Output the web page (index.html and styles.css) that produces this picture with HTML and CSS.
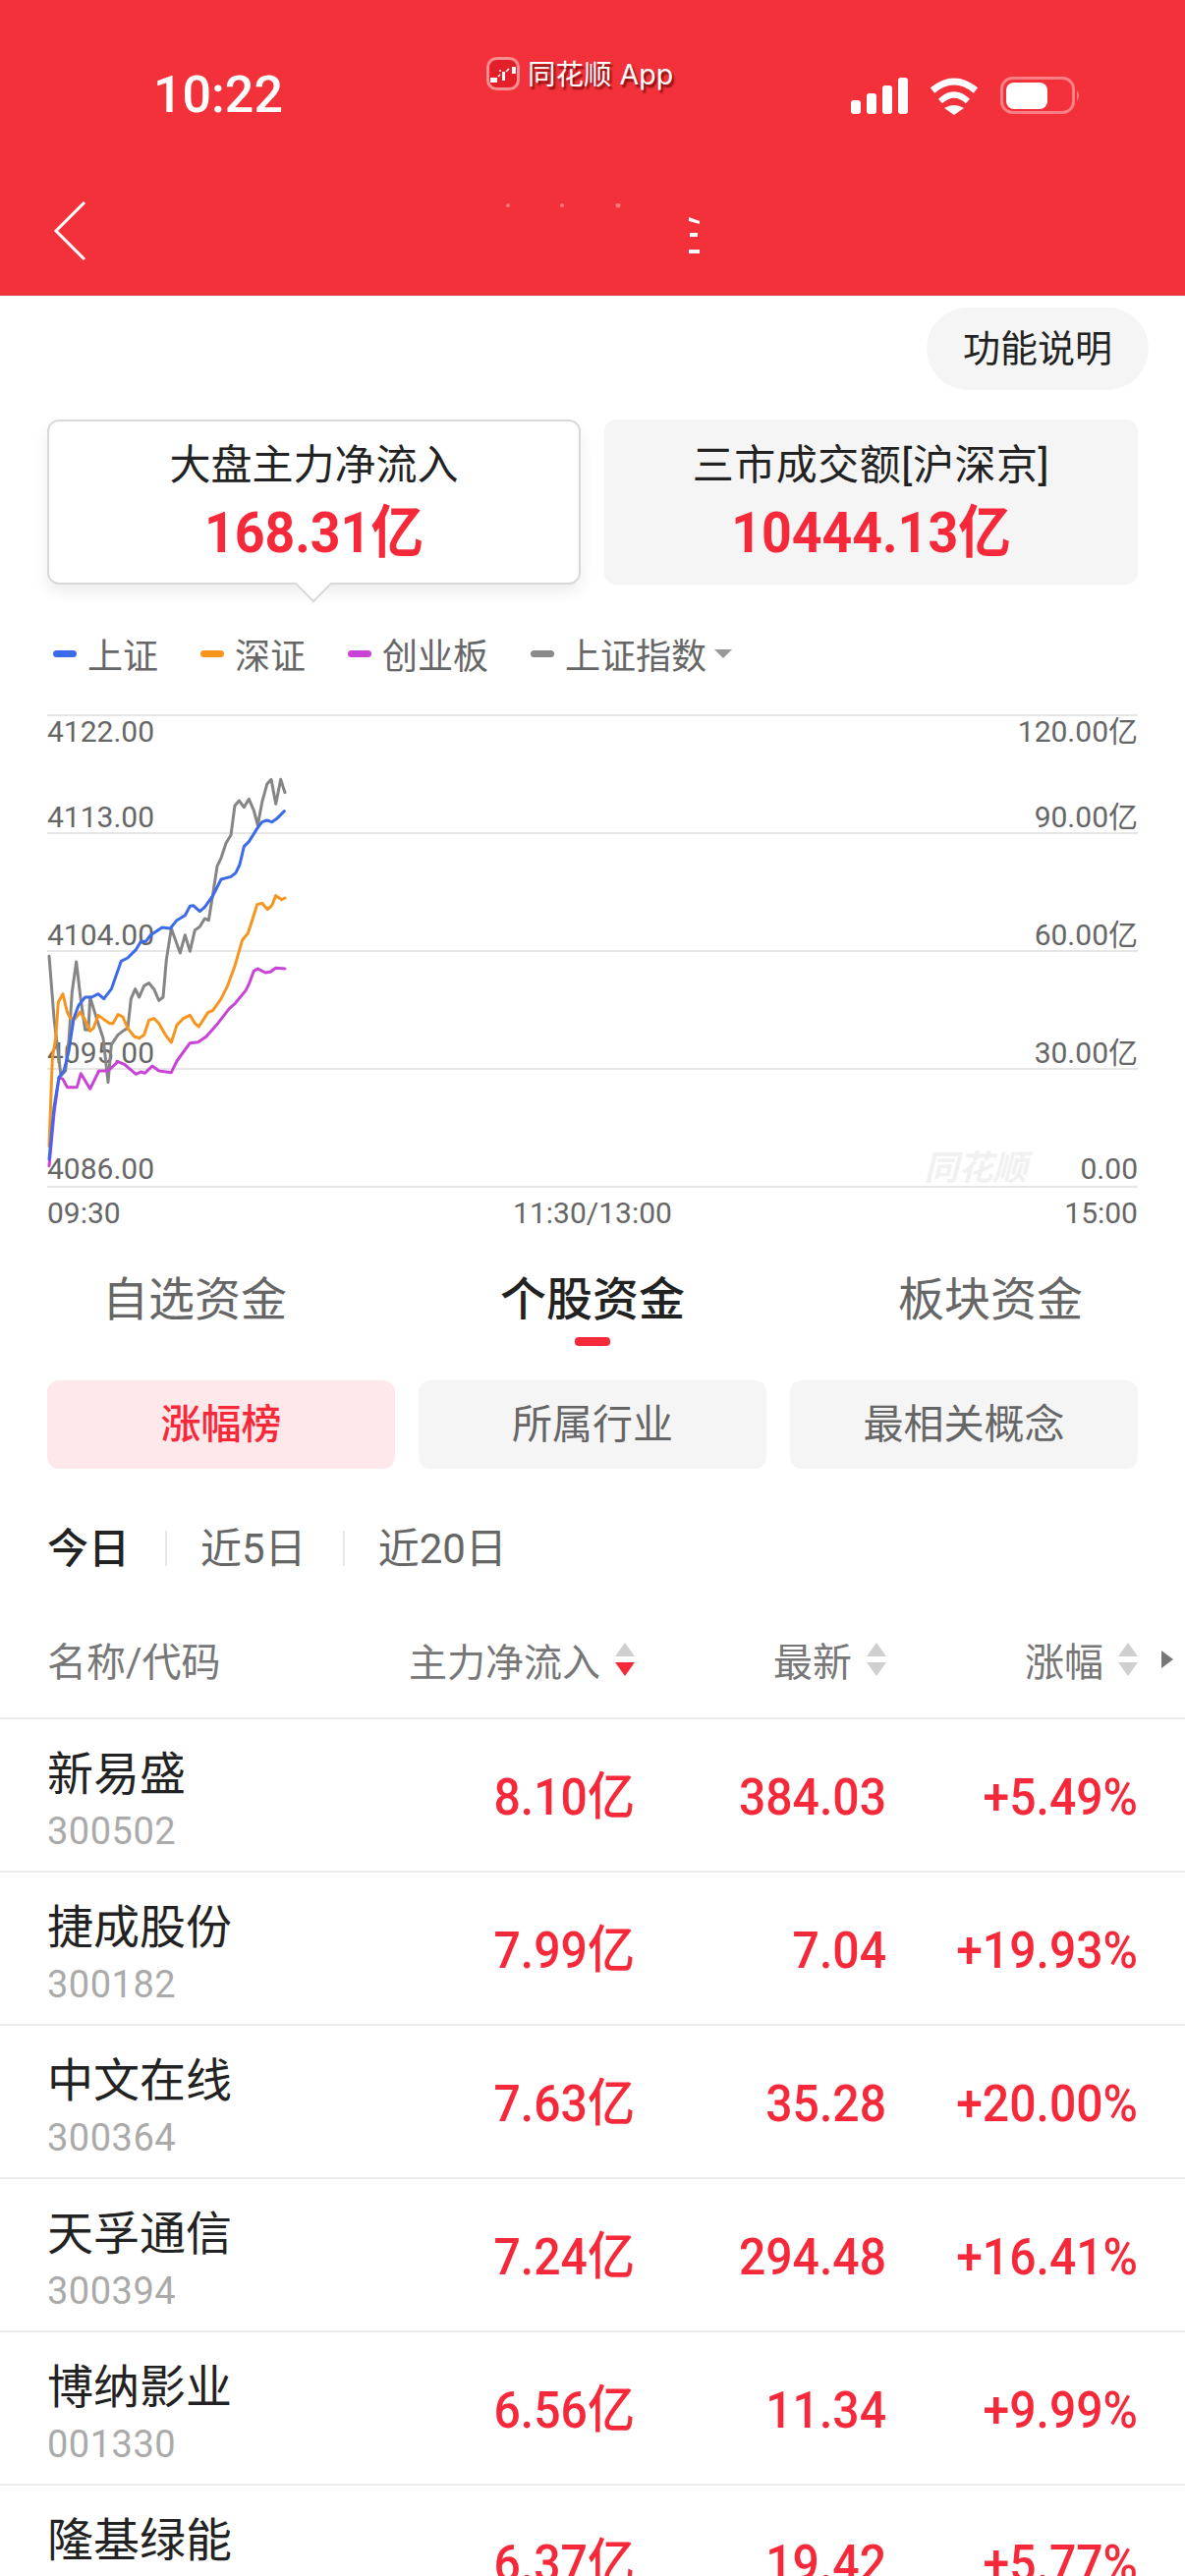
FILE: index.html
```html
<!DOCTYPE html>
<html lang="zh-CN">
<head>
<meta charset="utf-8">
<title>资金流向</title>
<link rel="stylesheet" href="styles.css">
</head>
<body>
<div class="page">
  <header class="header">
    <div class="status">
      <span class="clock">10:22</span>
      <span class="source">
        <svg class="source-logo" width="34" height="34" viewBox="0 0 34 34"><rect x="1.5" y="1.5" width="31" height="31" rx="9" fill="#e3202a" stroke="#f98d90" stroke-width="3"/><path d="M4 21h7v5H4zM16 15h3v9h-3zM26 10h4v7h-4z" fill="#fff"/><path d="M12 20l2-2M20 15l3-3M13 14h2" stroke="#fff" stroke-width="1.5" fill="none"/></svg>
        <span class="source-name">同花顺 App</span>
      </span>
      <span class="status-icons">
        <svg class="signal" width="58" height="38" viewBox="0 0 58 38"><rect x="0" y="23" width="10" height="14" rx="3"/><rect x="16" y="16" width="10" height="21" rx="3"/><rect x="32" y="8" width="10" height="29" rx="3"/><rect x="48" y="0" width="10" height="37" rx="3"/></svg>
        <svg class="wifi" width="50" height="38" viewBox="0 0 50 38"><path d="M3 13Q25-5 47 13" fill="none" stroke="#fff" stroke-width="7"/><path d="M11 24Q25 11 39 24" fill="none" stroke="#fff" stroke-width="6"/><path d="M15 31Q25 25 35 31L25 38Z" fill="#fff"/></svg>
        <svg class="battery" width="82" height="38" viewBox="0 0 82 38"><rect x="1.5" y="1.5" width="73" height="35" rx="11" fill="none" stroke="#fb8085" stroke-width="3"/><rect x="6" y="6" width="42" height="27" rx="8" fill="#fff"/><path d="M78 14q4 5 0 11z" fill="#fb8085"/></svg>
      </span>
    </div>
    <div class="nav">
      <svg class="back" width="34" height="60" viewBox="0 0 34 60"><path d="M32 1L3 30l29 29" fill="none" stroke="#fff" stroke-width="3"/></svg>
      <svg class="smudge" width="200" height="52" viewBox="0 0 200 52"><circle cx="2" cy="2" r="2" fill="#f9777d"/><circle cx="57" cy="2" r="2" fill="#f9777d"/><circle cx="114" cy="2" r="2.5" fill="#f9777d"/><path d="M186 14l11 4v3l-11-3zM187 30h8v4h-8zM186 47h11v4h-11z" fill="#fff"/></svg>
    </div>
  </header>

  <div class="help-row"><span class="help">功能说明</span></div>

  <section class="cards">
    <div class="card card-active">
      <div class="card-title">大盘主力净流入</div>
      <div class="card-value">168.31亿</div>
    </div>
    <div class="card card-plain">
      <div class="card-title">三市成交额[沪深京]</div>
      <div class="card-value">10444.13亿</div>
    </div>
  </section>

  <div class="legend">
    <span class="legend-item"><i class="dash dash-blue"></i>上证</span>
    <span class="legend-item"><i class="dash dash-orange"></i>深证</span>
    <span class="legend-item"><i class="dash dash-purple"></i>创业板</span>
    <span class="legend-item"><i class="dash dash-gray"></i>上证指数<i class="caret"></i></span>
  </div>

  <section class="chart">
    <div class="band band-first">
      <div class="band-row"><span>4122.00</span><span>120.00亿</span></div>
      <div class="band-row"><span>4113.00</span><span>90.00亿</span></div>
    </div>
    <div class="band"><div class="band-row"><span>4104.00</span><span>60.00亿</span></div></div>
    <div class="band"><div class="band-row"><span>4095.00</span><span>30.00亿</span></div></div>
    <div class="band band-last"><div class="band-row"><span>4086.00</span><span class="watermark">同花顺</span><span>0.00</span></div></div>
    <svg class="lines" width="1110" height="480" viewBox="24 -96 3330 1440">
      <polyline class="l l-gray" points="30,640 45,830 66,1005 80,990 90,900 100,750 113,657 125,760 140,865 150,865 155,765 175,830 195,890 210,1025 220,910 240,880 260,865 270,860 280,770 293,740 305,765 320,730 335,722 350,740 365,775 378,765 388,650 403,555 430,630 445,575 460,625 475,560 490,550 505,525 517,530 530,450 543,365 555,340 570,295 585,270 597,180 610,165 625,185 640,160 655,195 667,240 680,170 695,115 708,100 722,175 737,100 750,140"/>
      <polyline class="l l-orange" points="30,1220 40,950 50,890 58,780 72,755 85,810 95,830 110,830 125,810 140,835 155,868 165,860 180,820 200,835 215,845 225,845 240,818 255,825 270,860 290,885 305,890 320,880 335,835 350,830 365,845 385,880 403,903 420,850 440,830 460,820 475,845 487,855 515,812 530,805 555,770 575,730 597,670 620,590 637,570 650,530 665,482 680,478 697,497 710,485 722,455 740,467 750,462"/>
      <polyline class="l l-purple" points="30,1280 45,1120 60,1010 72,1015 85,1040 115,1040 127,998 155,1045 182,990 210,990 240,962 260,970 295,1000 310,993 322,997 345,975 365,990 403,995 420,960 460,905 485,902 510,885 545,845 580,800 597,785 630,745 640,725 655,685 667,678 690,690 705,688 722,676 750,678"/>
      <polyline class="l l-blue" points="30,1260 45,1100 60,1010 75,990 90,930 105,830 120,790 140,765 160,765 180,755 197,770 220,740 250,655 270,645 295,620 310,595 325,595 340,575 375,552 400,555 420,530 445,515 460,487 470,485 490,503 505,490 530,455 555,405 585,397 600,385 612,360 625,305 640,290 665,250 680,230 695,225 710,230 725,220 748,197"/>
    </svg>
  </section>
  <div class="axis"><span>09:30</span><span>11:30/13:00</span><span>15:00</span></div>

  <nav class="tabs">
    <span class="tab">自选资金</span>
    <span class="tab tab-active">个股资金</span>
    <span class="tab">板块资金</span>
  </nav>

  <div class="chips">
    <span class="chip chip-active">涨幅榜</span>
    <span class="chip">所属行业</span>
    <span class="chip">最相关概念</span>
  </div>

  <div class="periods">
    <span class="period period-active">今日</span>
    <span class="period">近5日</span>
    <span class="period">近20日</span>
  </div>

  <div class="thead">
    <span class="cell-name">名称/代码</span>
    <span class="cell cell-flow">主力净流入<svg class="sort" width="20" height="34" viewBox="0 0 20 34"><path d="M10 0l10 14H0z" fill="#cfcfcf"/><path d="M0 20h20L10 34z" fill="#f5293a"/></svg></span>
    <span class="cell cell-price">最新<svg class="sort" width="20" height="34" viewBox="0 0 20 34"><path d="M10 0l10 14H0z" fill="#cfcfcf"/><path d="M0 20h20L10 34z" fill="#cfcfcf"/></svg></span>
    <span class="cell cell-pct">涨幅<svg class="sort" width="20" height="34" viewBox="0 0 20 34"><path d="M10 0l10 14H0z" fill="#cfcfcf"/><path d="M0 20h20L10 34z" fill="#cfcfcf"/></svg></span>
    <svg class="more" width="12" height="18" viewBox="0 0 12 18"><path d="M0 0l12 9L0 18z" fill="#777"/></svg>
  </div>

  <div class="rows">
    <div class="row"><div class="cell-name"><div class="name">新易盛</div><div class="code">300502</div></div><span class="val cell-flow">8.10亿</span><span class="val cell-price">384.03</span><span class="val cell-pct">+5.49%</span></div>
    <div class="row"><div class="cell-name"><div class="name">捷成股份</div><div class="code">300182</div></div><span class="val cell-flow">7.99亿</span><span class="val cell-price">7.04</span><span class="val cell-pct">+19.93%</span></div>
    <div class="row"><div class="cell-name"><div class="name">中文在线</div><div class="code">300364</div></div><span class="val cell-flow">7.63亿</span><span class="val cell-price">35.28</span><span class="val cell-pct">+20.00%</span></div>
    <div class="row"><div class="cell-name"><div class="name">天孚通信</div><div class="code">300394</div></div><span class="val cell-flow">7.24亿</span><span class="val cell-price">294.48</span><span class="val cell-pct">+16.41%</span></div>
    <div class="row"><div class="cell-name"><div class="name">博纳影业</div><div class="code">001330</div></div><span class="val cell-flow">6.56亿</span><span class="val cell-price">11.34</span><span class="val cell-pct">+9.99%</span></div>
    <div class="row"><div class="cell-name"><div class="name">隆基绿能</div><div class="code">601012</div></div><span class="val cell-flow">6.37亿</span><span class="val cell-price">19.42</span><span class="val cell-pct">+5.77%</span></div>
  </div>
</div>
</body>
</html>
```
FILE: styles.css
```css
* { box-sizing: border-box; }
html, body { margin: 0; padding: 0; background: #fff; }
body { font-family: Roboto, "Noto Sans CJK SC", sans-serif; color: #222; }
.page { width: 1206px; height: 2622px; overflow: hidden; background: #fff; }

/* header */
.header { height: 301px; background: #f3313a; border-bottom: 1px solid #d9444b; }
.status { height: 190px; position: relative; display: flex; justify-content: space-between; align-items: flex-start; padding: 0 106px 0 156px; }
.clock { margin-top: 66px; font-size: 52px; line-height: 62px; font-weight: 500; color: #fff; }
.source { position: absolute; left: 495px; top: 57px; display: flex; align-items: center; gap: 8px; color: #fff; }
.source-name { margin-top: 2px; font-size: 28.5px; line-height: 34px; font-family: Inter, "Noto Sans CJK SC", sans-serif; text-shadow: 2px 3px 2px rgba(90, 0, 0, .75); }
.status-icons { margin-top: 78px; display: flex; align-items: flex-start; gap: 22px; }
.signal { fill: #fff; margin-top: 1px; }
.wifi { margin-top: 1px; }
.nav { position: relative; height: 110px; padding: 15px 0 0 54px; }
.back { display: block; }
.smudge { position: absolute; left: 515px; top: 17px; }

/* help */
.help-row { display: flex; justify-content: flex-end; padding: 12px 37px 0 0; }
.help { width: 226px; height: 84px; border-radius: 42px; background: #f5f5f5; font-size: 38px; line-height: 84px; text-align: center; color: #222; }

/* cards */
.cards { display: grid; grid-template-columns: 543px 543px; gap: 24px; padding: 30px 48px 0; }
.card { height: 168px; border-radius: 12px; text-align: center; padding-top: 22px; position: relative; }
.card-active { background: #fff; border: 2px solid #d9d9d9; box-shadow: 0 8px 16px rgba(0, 0, 0, .07); }
.card-active::after { content: ""; position: absolute; left: 256px; top: 153px; width: 24px; height: 24px; background: #fff; border-right: 2px solid #d9d9d9; border-bottom: 2px solid #d9d9d9; transform: rotate(45deg); }
.card-plain { background: #f5f5f5; padding-top: 24px; }
.card-plain .card-title { letter-spacing: .5px; }
.card-title { font-size: 42px; line-height: 46px; color: #222; }
.card-value { margin-top: 12px; font-size: 58px; line-height: 66px; font-weight: 700; color: #f5293a; transform: scaleX(.925); }

/* legend */
.legend { display: flex; gap: 43px; padding: 45px 0 0 54px; height: 132px; }
.legend-item { display: flex; align-items: center; height: 50px; font-size: 36px; color: #666; }
.dash { width: 24px; height: 7px; border-radius: 4px; margin-right: 11px; }
.dash-blue { background: #3b6bea; }
.dash-orange { background: #f7941d; }
.dash-purple { background: #c944d6; }
.dash-gray { background: #8a8a8a; }
.caret { width: 0; height: 0; margin-left: 8px; border-left: 9px solid transparent; border-right: 9px solid transparent; border-top: 9px solid #999; }

/* chart */
.chart { position: relative; margin: 0 48px; border-top: 2px solid #e6e6e6; }
.band { height: 120px; border-bottom: 2px solid #e6e6e6; display: flex; flex-direction: column; justify-content: flex-end; }
.band-first { justify-content: space-between; padding-top: 1px; }
.band-last { padding-bottom: 2px; }
.band-row { display: flex; justify-content: space-between; align-items: center; font-size: 30px; line-height: 30px; color: #666; }
.watermark { margin-left: auto; margin-right: 54px; font-size: 35px; font-style: italic; font-weight: 700; color: #f1f1f1; }
.lines { position: absolute; left: 0; top: -1px; }
.l { fill: none; stroke-width: 9; stroke-linejoin: round; stroke-linecap: round; }
.l-gray { stroke: #858585; }
.l-orange { stroke: #f7941d; }
.l-purple { stroke: #c944d6; }
.l-blue { stroke: #3b6bea; }
.axis { display: flex; justify-content: space-between; padding: 9px 48px 0; font-size: 30px; line-height: 34px; color: #666; }

/* tabs */
.tabs { display: flex; justify-content: space-between; padding: 41px 104px 0; }
.tab { position: relative; font-size: 47px; line-height: 60px; color: #666; }
.tab-active { color: #222; font-weight: 500; }
.tab-active::after { content: ""; position: absolute; left: 76px; top: 68px; width: 36px; height: 9px; border-radius: 4px; background: #f5293a; }

/* chips */
.chips { display: grid; grid-template-columns: repeat(3, 354px); gap: 24px; padding: 52px 48px 0; }
.chip { height: 90px; border-radius: 12px; background: #f5f5f5; font-size: 41px; line-height: 90px; text-align: center; color: #666; }
.chip-active { background: #ffe8ea; color: #f5293a; font-weight: 500; }

/* periods */
.periods { display: flex; padding: 52px 0 0 48px; height: 137px; }
.period { font-size: 42px; line-height: 60px; height: 60px; color: #666; }
.period + .period { position: relative; margin-left: 73px; }
.period + .period::before { content: ""; position: absolute; left: -36px; top: 11px; width: 2px; height: 36px; background: #e8e8e8; }
.period-active { color: #222; font-weight: 500; }
.period-active + .period { margin-left: 72px; }

/* table */
.thead, .row { position: relative; display: flex; align-items: center; padding-left: 48px; border-bottom: 2px solid #ececec; }
.thead { height: 118px; padding-bottom: 3px; font-size: 40px; color: #777; }
.thead .cell { display: flex; align-items: center; justify-content: flex-end; gap: 15px; }
.sort { flex: none; }
.cell-name { width: 300px; }
.cell-flow { width: 298px; text-align: right; }
.cell-price { width: 256px; text-align: right; }
.cell-pct { width: 256px; text-align: right; }
.thead .cell-name { width: 299px; }
.thead .cell-flow { width: 299px; font-size: 39px; }
.thead .cell-price { width: 256px; }
.thead .cell-pct { width: 256px; }
.more { margin-left: 24px; flex: none; }
.row { height: 156px; }
.name { font-size: 47px; line-height: 60px; color: #222; margin-top: 8px; }
.code { font-size: 38px; line-height: 44px; color: #aaa; margin-top: 6px; letter-spacing: .5px; }
.val { margin-top: 6px; font-size: 52px; font-weight: 500; line-height: 60px; color: #f5293a; transform: scaleX(.925); transform-origin: right center; }
```
